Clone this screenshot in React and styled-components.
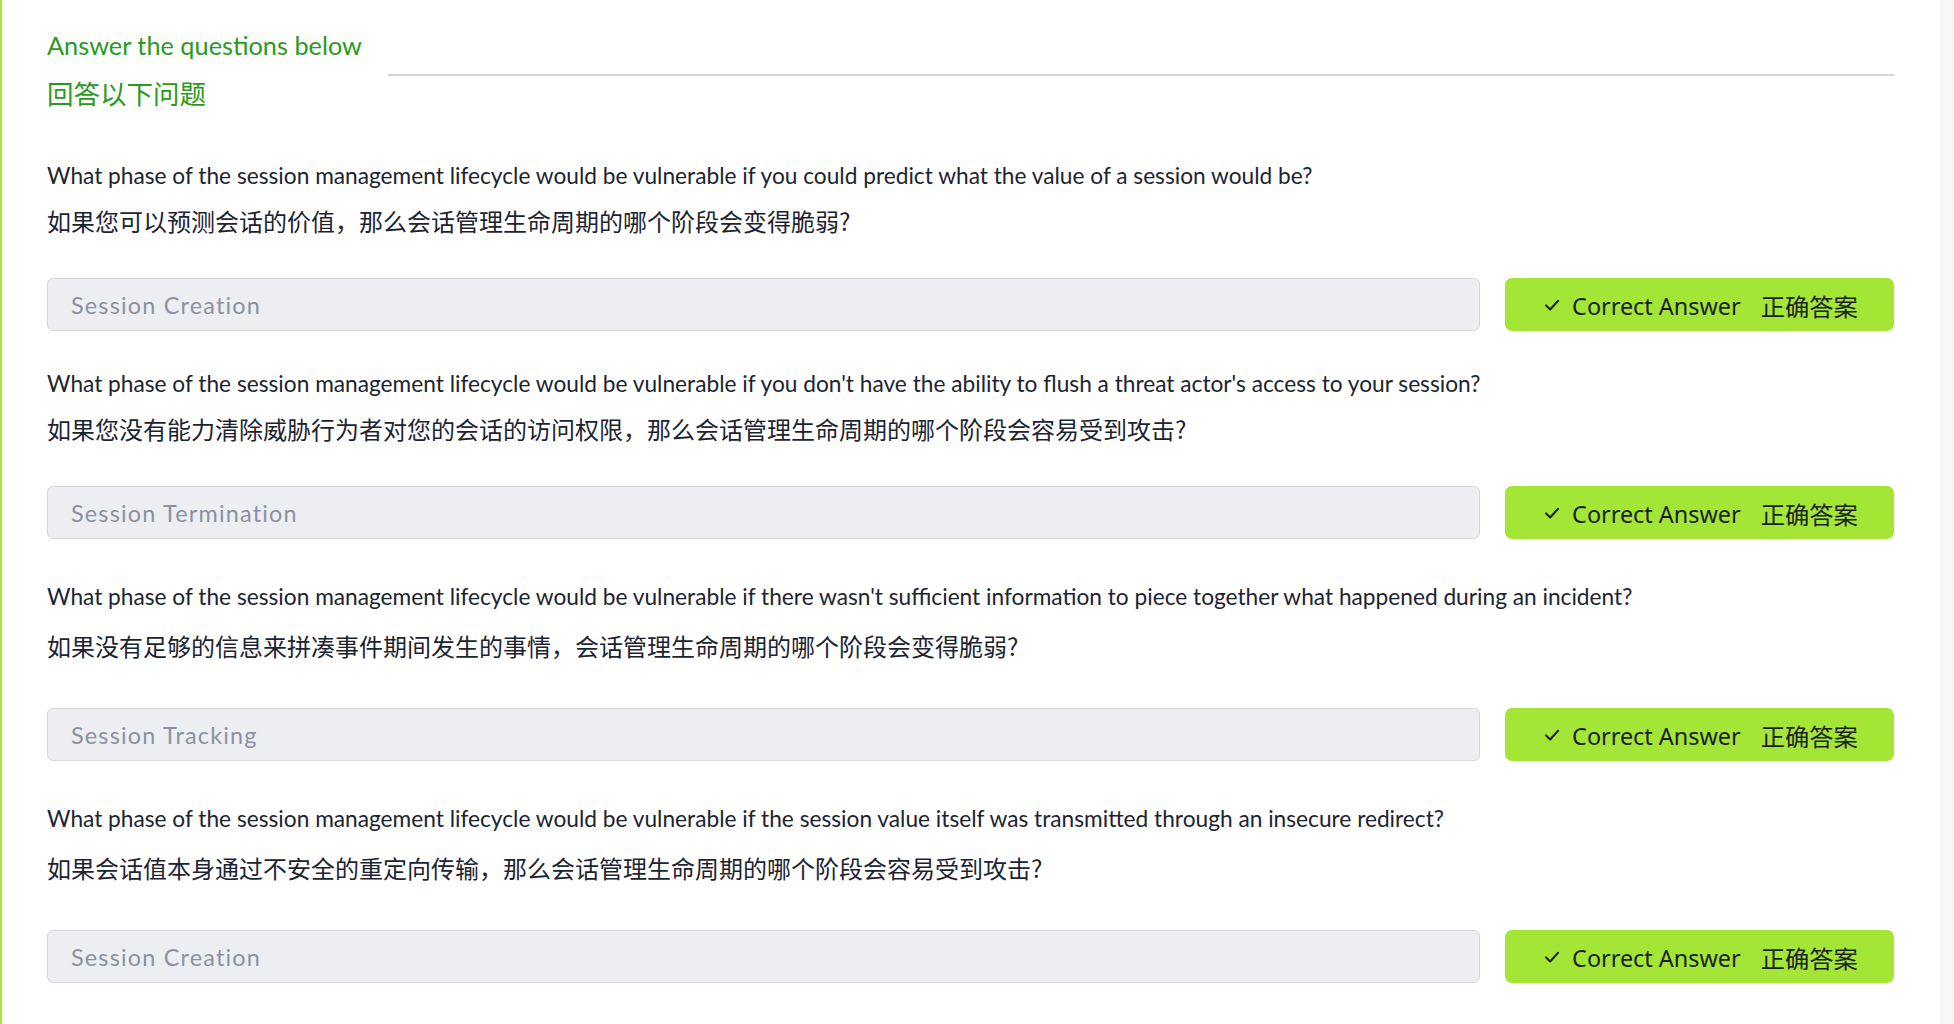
import React from "react";
import styled, { createGlobalStyle } from "styled-components";

const GlobalStyle = createGlobalStyle`
  html, body {
    margin: 0;
    padding: 0;
    background: #ffffff;
  }
  body {
    font-family: "Lato", "Noto Sans CJK SC", sans-serif;
    color: #1c2431;
  }
`

const Page = styled.div`
  display: flex;
  width: 1954px;
  height: 1024px;
  overflow: hidden;
`

const Main = styled.div`
  flex: 1;
  border-left: 2px solid #a3e635;
  padding: 21px 46px 0 45px;
  box-sizing: border-box;
`

const Gutter = styled.div`
  width: 14px;
  background: #f7f7f9;
`

const Header = styled.div`
  display: flex;
  align-items: flex-start;
`

const TitleBlock = styled.div`
  display: flex;
  flex-direction: column;
`

const Title = styled.div`
  font-family: ${p => p.$zh ? `"Noto Sans CJK SC", sans-serif` : `"Lato", sans-serif`};
  font-size: ${p => p.$zh ? "26.5px" : "25.3px"};
  line-height: 48px;
  color: #2a9a1c;
  white-space: nowrap;
`

const Rule = styled.div`
  flex: 1;
  height: 2px;
  background: #d1d5db;
  margin: 53px 0 0 26px;
`

const Question = styled.div`
  margin-top: ${p => p.$first ? "36px" : p.$loose ? "35px" : "30px"};
`

const EnLine = styled.div`
  font-size: 22.7px;
  line-height: 46px;
  white-space: nowrap;
`

const ZhLine = styled.div`
  font-family: "Noto Sans CJK SC", sans-serif;
  font-size: 24px;
  line-height: 44px;
  margin-top: ${p => p.$loose ? "4px" : "0"};
  white-space: nowrap;
`

const AnswerRow = styled.div`
  display: flex;
  gap: 25px;
  margin-top: ${p => p.$loose ? "40px" : "35px"};
`

const AnswerBox = styled.div`
  flex: 1;
  height: 53px;
  box-sizing: border-box;
  display: flex;
  align-items: center;
  padding-left: 23px;
  background: #edeef2;
  border: 1px solid #d4d7dd;
  border-radius: 6px;
  font-family: "Lato", sans-serif;
  font-size: 23.4px;
  letter-spacing: 1.2px;
  color: #8a92a2;
`

const CorrectButton = styled.div`
  width: 389px;
  height: 53px;
  flex-shrink: 0;
  display: flex;
  align-items: center;
  justify-content: center;
  gap: 11px;
  background: #a3e635;
  border-radius: 7px;
  color: #1c1f26;
  font-family: "Noto Sans", "Noto Sans CJK SC", sans-serif;
  font-size: 23.4px;
  padding-left: 2px;
  box-sizing: border-box;
`

const ZhLabel = styled.span`
  font-family: "Noto Sans CJK SC", sans-serif;
  font-size: 24.3px;
  margin-left: 20px;
  position: relative;
  top: 1px;
`

const Check = () => (
  <svg width="18" height="18" viewBox="0 0 24 24" fill="none" stroke="#1c1f26" strokeWidth="2.8" strokeLinecap="round" strokeLinejoin="round">
    <polyline points="4 12.5 9.5 18 20 6.5" />
  </svg>
)

const questions = [
  {
    en: "What phase of the session management lifecycle would be vulnerable if you could predict what the value of a session would be?",
    zh: "如果您可以预测会话的价值，那么会话管理生命周期的哪个阶段会变得脆弱?",
    answer: "Session Creation",
  },
  {
    en: "What phase of the session management lifecycle would be vulnerable if you don't have the ability to flush a threat actor's access to your session?",
    zh: "如果您没有能力清除威胁行为者对您的会话的访问权限，那么会话管理生命周期的哪个阶段会容易受到攻击?",
    answer: "Session Termination",
  },
  {
    en: "What phase of the session management lifecycle would be vulnerable if there wasn't sufficient information to piece together what happened during an incident?",
    zh: "如果没有足够的信息来拼凑事件期间发生的事情，会话管理生命周期的哪个阶段会变得脆弱?",
    answer: "Session Tracking",
    loose: true,
  },
  {
    en: "What phase of the session management lifecycle would be vulnerable if the session value itself was transmitted through an insecure redirect?",
    zh: "如果会话值本身通过不安全的重定向传输，那么会话管理生命周期的哪个阶段会容易受到攻击?",
    answer: "Session Creation",
    loose: true,
  },
]

export default function App() {
  return (
    <Page>
      <GlobalStyle />
      <Main>
        <Header>
          <TitleBlock>
            <Title>Answer the questions below</Title>
            <Title $zh>回答以下问题</Title>
          </TitleBlock>
          <Rule />
        </Header>
        {questions.map((q, i) => (
          <Question key={i} $first={i === 0} $loose={q.loose}>
            <EnLine>{q.en}</EnLine>
            <ZhLine $loose={q.loose}>{q.zh}</ZhLine>
            <AnswerRow $loose={q.loose}>
              <AnswerBox>{q.answer}</AnswerBox>
              <CorrectButton>
                <Check />
                <span>Correct Answer<ZhLabel>正确答案</ZhLabel></span>
              </CorrectButton>
            </AnswerRow>
          </Question>
        ))}
      </Main>
      <Gutter />
    </Page>
  )
}
